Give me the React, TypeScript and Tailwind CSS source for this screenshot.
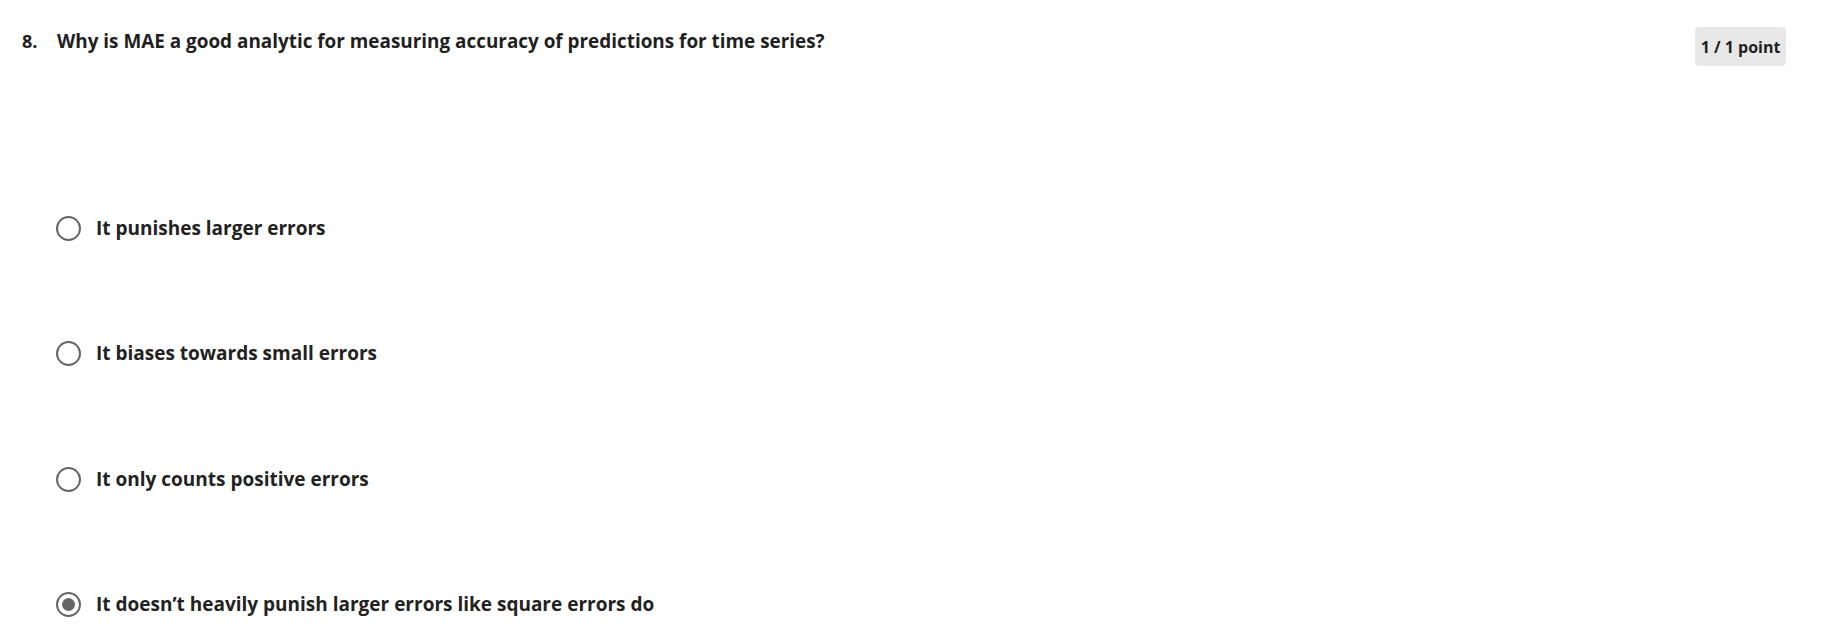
export default function App() {
  const options = [
    "It punishes larger errors",
    "It biases towards small errors",
    "It only counts positive errors",
    "It doesn’t heavily punish larger errors like square errors do",
  ];
  const selected = 3;
  return (
    <div className="w-[1822px] h-[635px] bg-white text-[#1f1f1f] font-['Open_Sans',sans-serif] overflow-hidden">
      {/* Question header */}
      <div className="flex items-start justify-between pl-[22px] pr-[36px] pt-[27px]">
        <div className="flex items-center h-[28px]">
          <span className="w-[35px] text-[18px] font-bold">8.</span>
          <h2 className="text-[18.9px] font-bold">
            Why is MAE a good analytic for measuring accuracy of predictions for time series?
          </h2>
        </div>
        <div className="h-[39px] w-[91px] rounded-[4px] bg-[#e8e8e8] flex items-center justify-center text-[16px] font-bold">
          1 / 1 point
        </div>
      </div>

      {/* Options */}
      <div className="flex flex-col gap-[100.5px] pl-[56px] pt-[149.5px]">
        {options.map((o, i) => (
          <label key={o} className="flex items-center h-[25px] gap-[15px]">
            <span className="w-[25px] h-[25px] rounded-full border-[2.5px] border-[#666] flex items-center justify-center">
              {i === selected && <span className="w-[13px] h-[13px] rounded-full bg-[#666]" />}
            </span>
            <span className="text-[19px] font-bold text-[#222]">{o}</span>
          </label>
        ))}
      </div>
    </div>
  );
}
